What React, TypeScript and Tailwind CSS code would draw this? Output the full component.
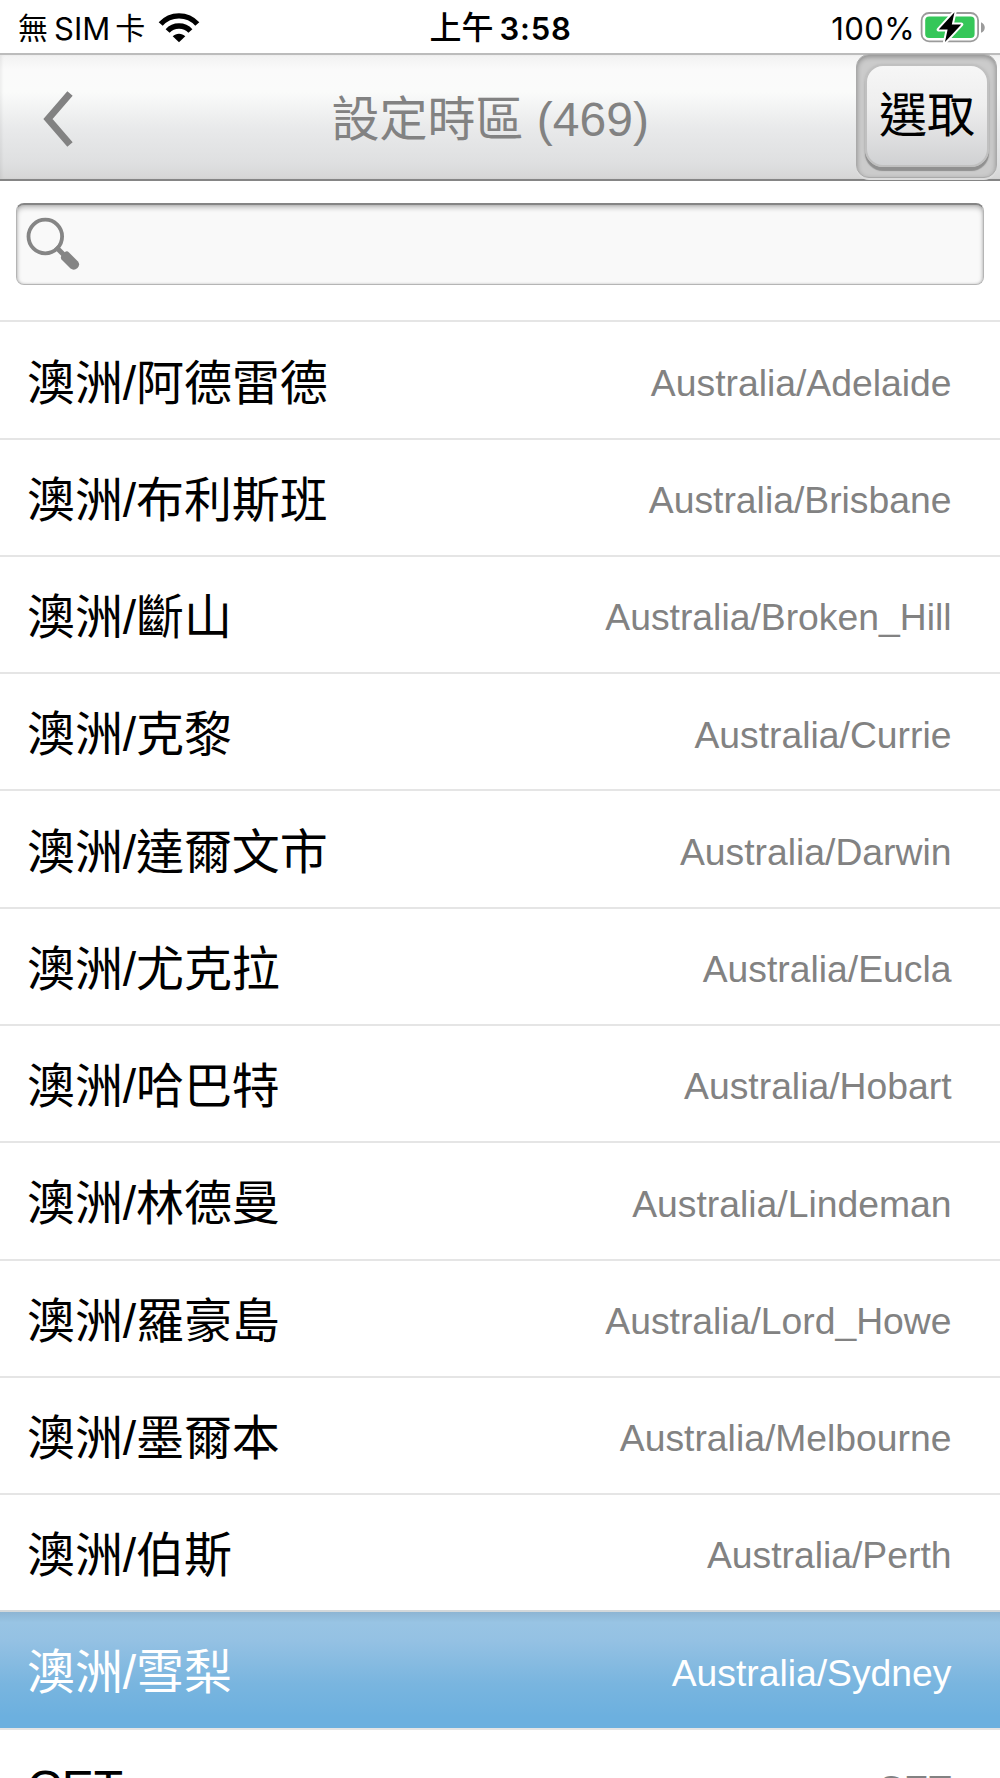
const zones: { name: string; id: string; selected?: boolean; latin?: boolean }[] = [
  { name: "澳洲/阿德雷德", id: "Australia/Adelaide" },
  { name: "澳洲/布利斯班", id: "Australia/Brisbane" },
  { name: "澳洲/斷山", id: "Australia/Broken_Hill" },
  { name: "澳洲/克黎", id: "Australia/Currie" },
  { name: "澳洲/達爾文市", id: "Australia/Darwin" },
  { name: "澳洲/尤克拉", id: "Australia/Eucla" },
  { name: "澳洲/哈巴特", id: "Australia/Hobart" },
  { name: "澳洲/林德曼", id: "Australia/Lindeman" },
  { name: "澳洲/羅豪島", id: "Australia/Lord_Howe" },
  { name: "澳洲/墨爾本", id: "Australia/Melbourne" },
  { name: "澳洲/伯斯", id: "Australia/Perth" },
  { name: "澳洲/雪梨", id: "Australia/Sydney", selected: true },
  { name: "CET", id: "CET", latin: true },
];

function WifiIcon() {
  return (
    <svg width="42" height="32" viewBox="0 0 42 32" fill="none">
      <path d="M21 31.2L14.7 25.3C18 21.8 24 21.8 27.3 25.3Z" fill="#000" />
      <path d="M9.6 20C15.6 13.4 26.4 13.4 32.4 20" stroke="#000" strokeWidth="5.4" />
      <path d="M2.7 13C12.5 2.1 29.5 2.1 39.3 13" stroke="#000" strokeWidth="5.4" />
    </svg>
  );
}

function BatteryIcon() {
  return (
    <svg width="66" height="32" viewBox="0 0 66 32" fill="none">
      <rect x="1.6" y="2" width="56.5" height="28.4" rx="7.5" stroke="#9b9b9b" strokeWidth="1.8" />
      <rect x="5.2" y="5.4" width="49.4" height="21.6" rx="4" fill="#35c759" />
      <path d="M61 11.2C66 13 66 20 61 21.8Z" fill="#9b9b9b" />
      <path
        d="M34.5 1.2L18.7 18.6H27.6L25 31L41.3 13.4H31.8Z"
        fill="#000"
        stroke="#fff"
        strokeWidth="4"
        strokeLinejoin="round"
      />
      <path d="M34.5 1.2L18.7 18.6H27.6L25 31L41.3 13.4H31.8Z" fill="#000" />
    </svg>
  );
}

function StatusBar() {
  return (
    <div className="grid h-[53px] grid-cols-[1fr_auto_1fr] items-center pt-[3px] pl-[18px] pr-[14px] font-['Inter','Noto_Sans_CJK_TC',sans-serif] text-[31px] leading-none text-black">
      <div className="flex items-center whitespace-nowrap">
        <span className="text-[30px]">無</span>
        <span className="ml-[6px] text-[31px]">SIM</span>
        <span className="ml-[5px] text-[30px]">卡</span>
        <span className="-mt-[3px] ml-[13px]"><WifiIcon /></span>
      </div>
      <div className="-ml-[3px] flex items-center font-semibold whitespace-nowrap">
        <span className="text-[32px] font-medium">上午</span>
        <span className="ml-[6px] tracking-[0.8px]">3:58</span>
      </div>
      <div className="flex items-center justify-end whitespace-nowrap">
        <span className="tracking-[0.4px]">100%</span>
        <span className="-mt-[3px] ml-[5px]"><BatteryIcon /></span>
      </div>
    </div>
  );
}

function Header() {
  return (
    <div className="relative flex h-[128px] items-center border-t-2 border-b-2 border-t-[#bcbcbc] border-b-[#858585] bg-[linear-gradient(#f2f2f2_0%,#fafafa_12%,#fafbfa_30%,#e9eaeb_58%,#dedfe0_88%,#d6d6d6_100%)] shadow-[inset_2px_0_3px_rgba(0,0,0,0.05)]">
      <svg className="mt-[4px] ml-[43px]" width="32" height="60" viewBox="0 0 32 60" fill="none">
        <path d="M27 4.5L5 30L27 55.5" stroke="#828282" strokeWidth="7" />
      </svg>
      <h1 className="mt-[5px] ml-[256.5px] text-[48px] leading-[60px] whitespace-nowrap text-[#828282]">設定時區 (469)</h1>
      <div className="absolute top-[-1.5px] right-[3px] h-[124px] w-[141px] rounded-[13px] border border-[#aaa] bg-[#cbcbcb] pt-[9px] pr-[7px] pl-[8px] shadow-[inset_0_2px_5px_rgba(0,0,0,0.3),0_2px_0_#ddd]">
        <button className="flex h-[103px] w-full items-center justify-center rounded-[18px] border-2 border-[#c0c0c0] bg-[linear-gradient(#f6f6f6,#eeeeee_40%,#d0d1d3)] pt-[2px] text-[48px] leading-none whitespace-nowrap text-black shadow-[0_4px_1px_#909090,0_1px_3px_#aaa]">
          選取
        </button>
      </div>
    </div>
  );
}

function SearchField() {
  return (
    <div className="mx-4 mt-[21.5px] flex h-[82px] items-start rounded-lg border border-t-2 border-[#b5b5b5] border-t-[#858585] bg-[#f9f9f9] pt-[12.5px] pl-[9px] shadow-[inset_0_3px_5px_rgba(0,0,0,0.22),inset_0_0_3px_rgba(0,0,0,0.18)]">
      <svg width="55" height="55" viewBox="0 0 55 55" fill="none">
        <circle cx="19.3" cy="19.5" r="16.8" stroke="#858585" strokeWidth="3.8" />
        <path d="M30 30L41 41" stroke="#858585" strokeWidth="5" />
        <path d="M35.5 42.5Q34 40 36 38L39 35Q41 33.5 43 35.5L52 44.5Q54.5 48 51.5 51Q48 54 44.5 51.5Z" fill="#858585" />
      </svg>
    </div>
  );
}

export default function App() {
  return (
    <div className="h-[1778px] w-[1000px] overflow-hidden bg-white font-['Liberation_Sans','Noto_Sans_CJK_TC',sans-serif]">
      <StatusBar />
      <Header />
      <SearchField />
      <ul className="mt-[35.9px]">
        {zones.map((z) => (
          <li
            key={z.id}
            className={
              z.selected
                ? "flex h-[117.27px] items-center justify-between border-t-2 border-[#d4d8da] bg-[linear-gradient(#8db5d3_0%,#98c4e4_9%,#94c1e3_25%,#79b5df_62%,#6cb0df_90%)] pr-[48.5px] pl-[27px] text-white"
                : "flex h-[117.27px] items-center justify-between border-t-2 border-[#e5e5e5] pr-[48.5px] pl-[27px] text-black"
            }
          >
            <span
              className={
                z.latin
                  ? "pt-[2px] text-[48px] leading-[60px] whitespace-nowrap"
                  : "pt-[7px] text-[48px] leading-[60px] tracking-[-0.1px] whitespace-nowrap"
              }
            >
              {z.name}
            </span>
            <span
              className={
                z.selected
                  ? "pt-[6px] text-[37.3px] leading-[44px] text-white"
                  : z.latin
                    ? "pt-[4px] text-[37.3px] leading-[44px] text-[#828282]"
                    : "pt-[5.5px] text-[37.3px] leading-[44px] text-[#828282]"
              }
            >
              {z.id}
            </span>
          </li>
        ))}
      </ul>
    </div>
  );
}
